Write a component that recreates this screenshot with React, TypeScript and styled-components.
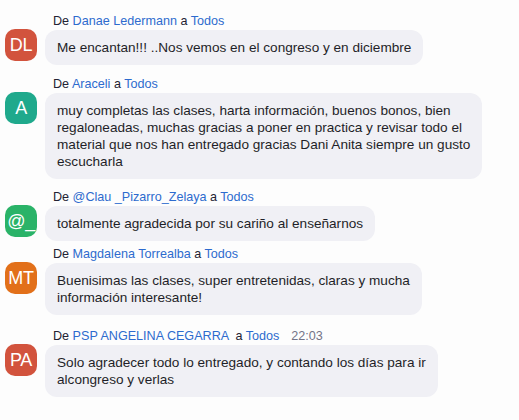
import React from "react";
import styled, { createGlobalStyle } from "styled-components";

const GlobalStyle = createGlobalStyle`
  html, body {
    margin: 0;
    padding: 0;
    background: #fdfdfd;
  }
  body {
    font-family: "Liberation Sans", Arial, Helvetica, sans-serif;
    -webkit-font-smoothing: antialiased;
  }
`;

const Chat = styled.div`
  display: flex;
  flex-direction: column;
  gap: 10px;
  padding: 13px 0 0 5px;
  width: 519px;
  height: 420px;
  box-sizing: border-box;
  overflow: hidden;
`;

const Message = styled.div<{ $shift?: number }>`
  display: grid;
  grid-template-columns: 32px auto;
  grid-template-rows: 17px auto;
  column-gap: 8px;
  justify-content: start;
  margin-top: ${(p) => p.$shift ?? 0}px;
`;

const Header = styled.div`
  grid-column: 2;
  grid-row: 1;
  padding-left: 8px;
  font-size: 12.6px;
  line-height: 17px;
  color: #232333;
  white-space: pre;
`;

const Link = styled.span`
  color: #2d6bce;
`;

const Time = styled.span`
  color: #747487;
  margin-left: 12px;
`;

const Avatar = styled.div<{ $bg: string }>`
  grid-column: 1;
  grid-row: 2;
  align-self: start;
  margin-top: -1px;
  width: 32px;
  height: 32px;
  border-radius: 10px;
  background: ${(p) => p.$bg};
  color: #ffffff;
  font-size: 18px;
  display: flex;
  align-items: center;
  justify-content: center;
  letter-spacing: -0.3px;
`;

const Bubble = styled.div`
  grid-column: 2;
  grid-row: 2;
  justify-self: start;
  background: #f0f0f5;
  border-radius: 12px;
  padding: 9px 12px;
  font-size: 13.6px;
  line-height: 17px;
  color: #1f1f28;
  white-space: nowrap;
`;

type Msg = {
  initials: string;
  color: string;
  name: string;
  time?: string;
  shift?: number;
  lines: string[];
};

const messages: Msg[] = [
  {
    initials: "DL",
    color: "#d2533d",
    name: "Danae Ledermann",
    lines: ["Me encantan!!! ..Nos vemos en el congreso y en diciembre"],
  },
  {
    initials: "A",
    color: "#1fa98c",
    name: "Araceli",
    shift: 1,
    lines: [
      "muy completas las clases, harta información, buenos bonos, bien",
      "regaloneadas, muchas gracias a poner en practica y revisar todo el",
      "material que nos han entregado gracias Dani Anita siempre un gusto",
      "escucharla",
    ],
  },
  {
    initials: "@_",
    color: "#2ab368",
    name: "@Clau _Pizarro_Zelaya",
    lines: ["totalmente agradecida por su cariño al enseñarnos"],
  },
  {
    initials: "MT",
    color: "#e2701a",
    name: "Magdalena Torrealba",
    shift: -5,
    lines: [
      "Buenisimas las clases, super entretenidas, claras y mucha",
      "información interesante!",
    ],
  },
  {
    initials: "PA",
    color: "#d2533d",
    name: "PSP ANGELINA CEGARRA ",
    time: "22:03",
    shift: 3,
    lines: [
      "Solo agradecer todo lo entregado, y contando los días para ir",
      "alcongreso y verlas",
    ],
  },
];

export default function App() {
  return (
    <>
      <GlobalStyle />
      <Chat>
        {messages.map((m, i) => (
          <Message key={i} $shift={m.shift}>
            <Header>
              De <Link>{m.name}</Link> a <Link>Todos</Link>
              {m.time && <Time>{m.time}</Time>}
            </Header>
            <Avatar $bg={m.color}>{m.initials}</Avatar>
            <Bubble>
              {m.lines.map((l, j) => (
                <React.Fragment key={j}>
                  {j > 0 && <br />}
                  {l}
                </React.Fragment>
              ))}
            </Bubble>
          </Message>
        ))}
      </Chat>
    </>
  );
}
